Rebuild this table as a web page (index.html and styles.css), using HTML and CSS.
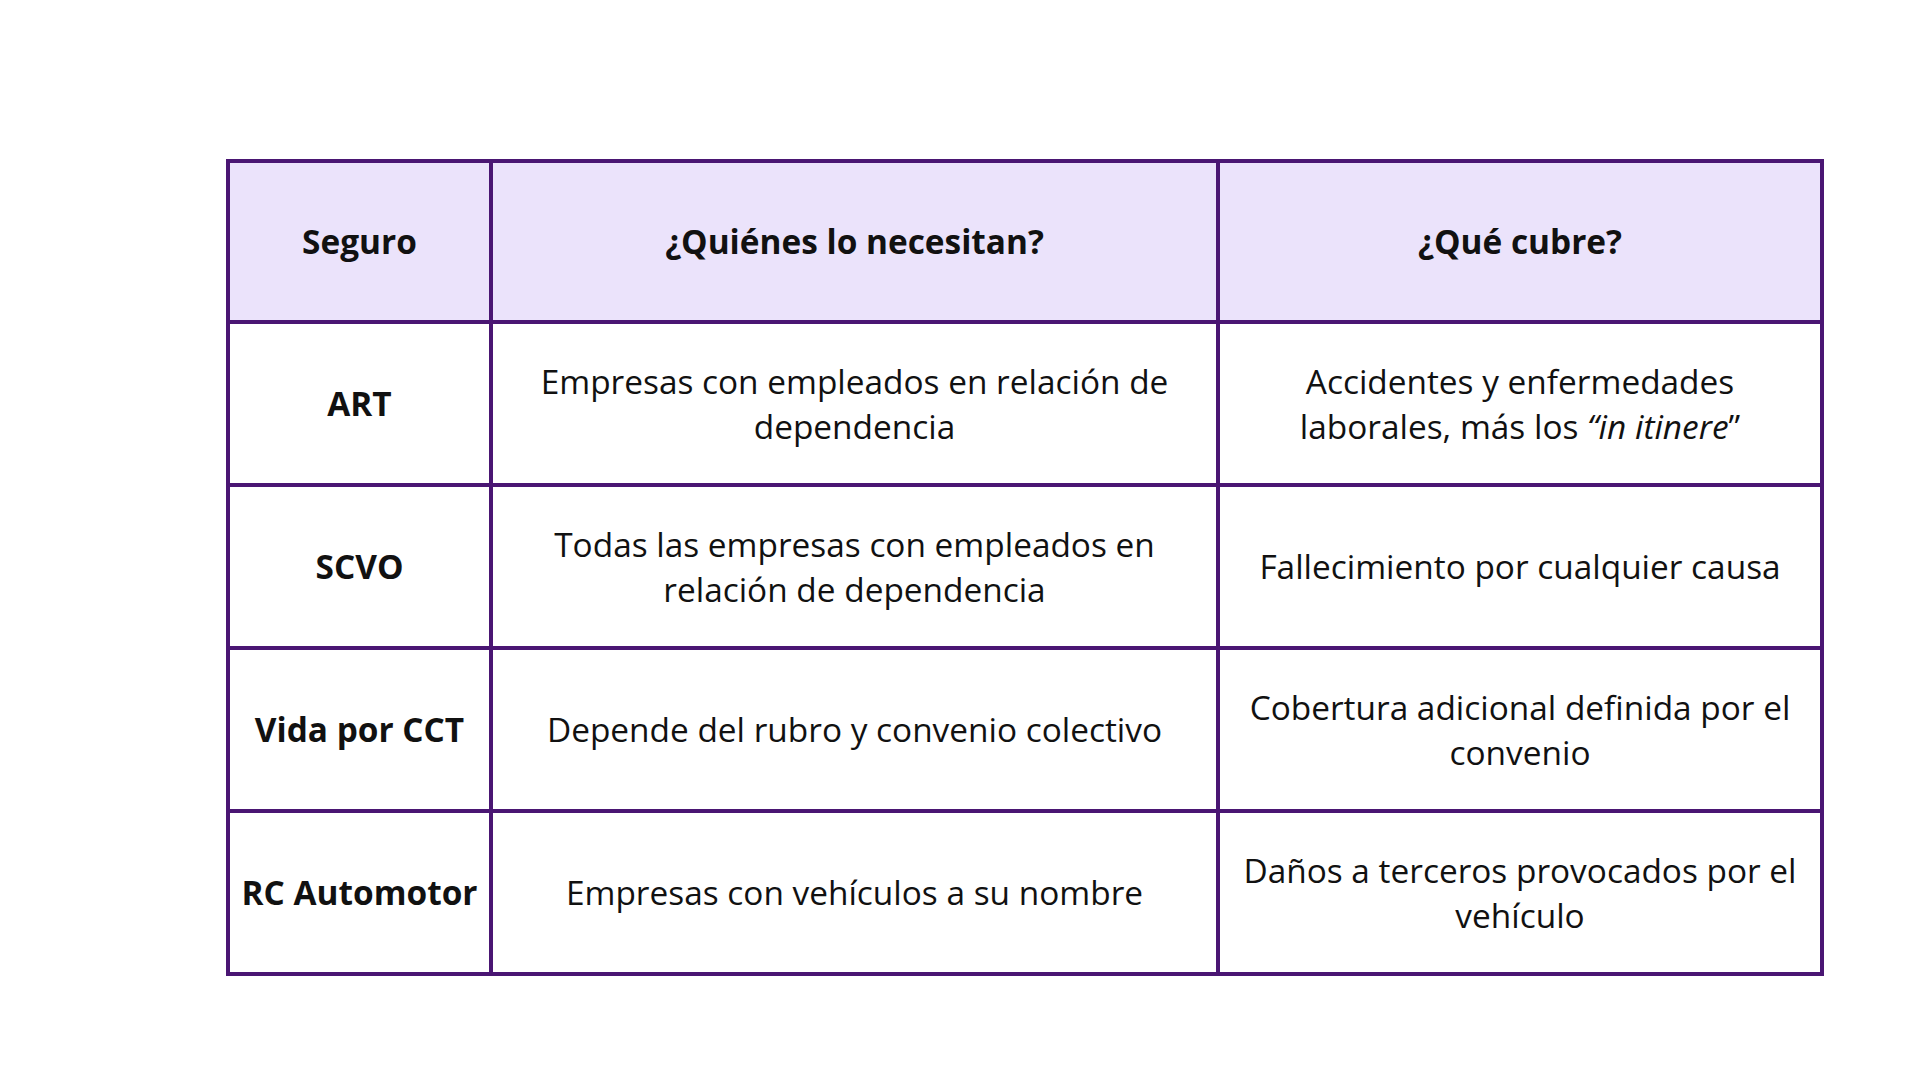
FILE: index.html
```html
<!DOCTYPE html>
<html lang="es">
<head>
<meta charset="utf-8">
<title>Seguros</title>
<link rel="stylesheet" href="styles.css">
</head>
<body>
<main class="page">
  <table class="grid">
    <colgroup>
      <col class="c1">
      <col class="c2">
      <col class="c3">
    </colgroup>
    <thead>
      <tr>
        <th>Seguro</th>
        <th>¿Quiénes lo necesitan?</th>
        <th>¿Qué cubre?</th>
      </tr>
    </thead>
    <tbody>
      <tr>
        <th>ART</th>
        <td>Empresas con empleados en relación de dependencia</td>
        <td>Accidentes y enfermedades laborales, más los <em>“in itinere</em>”</td>
      </tr>
      <tr>
        <th>SCVO</th>
        <td>Todas las empresas con empleados en relación de dependencia</td>
        <td>Fallecimiento por cualquier causa</td>
      </tr>
      <tr>
        <th>Vida por CCT</th>
        <td>Depende del rubro y convenio colectivo</td>
        <td>Cobertura adicional definida por el convenio</td>
      </tr>
      <tr>
        <th>RC Automotor</th>
        <td>Empresas con vehículos a su nombre</td>
        <td>Daños a terceros provocados por el vehículo</td>
      </tr>
    </tbody>
  </table>
</main>
</body>
</html>
```
FILE: styles.css
```css
html, body {
  margin: 0;
  padding: 0;
  background: #ffffff;
}
.page {
  padding: 159px 0 0 226px;
}
.grid {
  border-collapse: collapse;
  table-layout: fixed;
  width: 1594px;
  font-family: "Open Sans", "Noto Sans", sans-serif;
  color: #111111;
  font-size: 33.4px;
  line-height: 45px;
}
.c1 { width: 263px; }
.c2 { width: 727px; }
.c3 { width: 604px; }
.grid th, .grid td {
  border: 4px solid #4a1673;
  text-align: center;
  vertical-align: middle;
  height: 163px;
  padding: 0 18px;
  box-sizing: border-box;
}
.grid th {
  font-weight: 700;
  padding: 0 6px;
}
.grid td {
  font-weight: 400;
}
.grid thead th {
  background: #ebe3fb;
  height: 161px;
  padding-bottom: 1px;
}
.grid em {
  font-style: italic;
}
```
